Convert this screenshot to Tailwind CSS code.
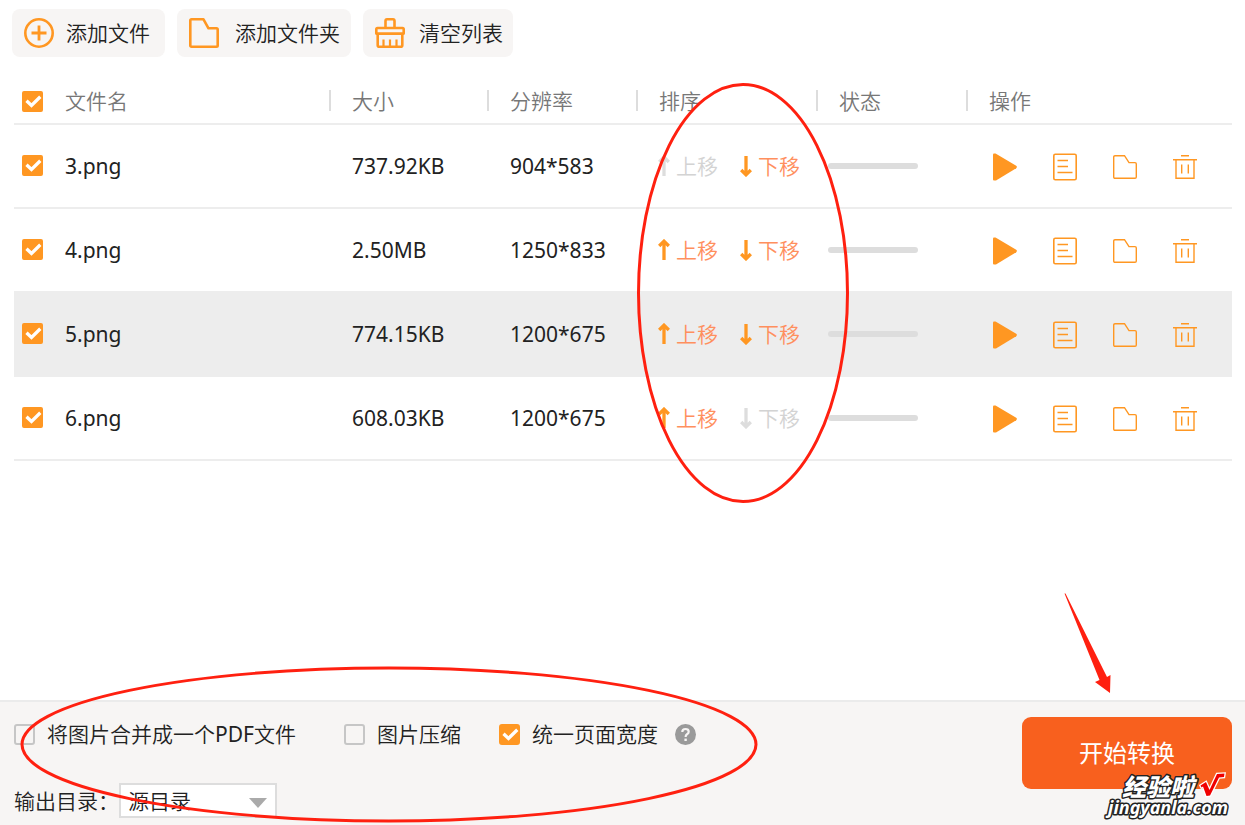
<!DOCTYPE html>
<html lang="zh-CN">
<head>
<meta charset="utf-8">
<meta name="viewport" content="width=device-width, initial-scale=1">
<title>图片转PDF</title>
<script src="https://cdn.jsdelivr.net/npm/@tailwindcss/browser@4"></script>
</head>
<body class="bg-white font-['Noto_Sans','Noto_Sans_CJK_SC',sans-serif] text-[21px] leading-6 text-[#222]">

<svg class="hidden" aria-hidden="true">
  <symbol id="check" viewBox="0 0 21 21"><path d="M4.500 9.700l5 4.700L18.300 5.800" fill="none" stroke="#fff" stroke-width="3.300"/></symbol>
  <symbol id="up" viewBox="0 0 12 22"><path d="M6 21V2.500M1.200 7L6 2.200L10.800 7" fill="none" stroke="currentColor" stroke-width="3.300"/></symbol>
  <symbol id="down" viewBox="0 0 12 22"><path d="M6 1V19.500M1.200 15L6 19.800L10.800 15" fill="none" stroke="currentColor" stroke-width="3.300"/></symbol>
  <symbol id="play" viewBox="0 0 24 28"><path d="M0 1.500Q0 .4 1 .4H2.500L23.200 12.800Q24.600 14 23.200 15.200L3 27.500H1Q0 27.500 0 26.500Z" fill="currentColor"/></symbol>
  <symbol id="doc" viewBox="0 0 24 28"><g fill="none" stroke="currentColor" stroke-width="1.600"><rect x=".8" y="1.200" width="22.400" height="25.600" rx="1.500"/><path d="M4.500 7.500H15M4.500 13.500H15M4.500 19.500H19.500"/></g></symbol>
  <symbol id="folder" viewBox="0 0 24 24"><path d="M2 .7H11.500L16 7.600H22Q23.300 7.600 23.300 8.900V22Q23.300 23.300 22 23.300H2Q.7 23.300 .7 22V2Q.7 .7 2 .7Z" fill="none" stroke="currentColor" stroke-width="1.400"/></symbol>
  <symbol id="trash" viewBox="0 0 24 24"><path d="M8 .7H16M0 4.700H24M3 5V23.300H21V5M8.700 9.500V18.500M15.300 9.500V18.500" fill="none" stroke="currentColor" stroke-width="1.400"/></symbol>
</svg>

<div class="relative flex min-h-screen flex-col overflow-hidden">
  <header class="flex gap-3 px-3 pt-[9px]">
    <button class="flex h-12 items-center gap-3 rounded-lg bg-[#f7f5f4] pr-[15px] pl-3 font-[350]">
      <svg class="size-[30px]" viewBox="0 0 30 30" fill="none" stroke="#ff9722"><circle cx="15" cy="15" r="13.700" stroke-width="2.600"/><path d="M15 7.500V22.500M7.500 15H22.500" stroke-width="2.800"/></svg>
      添加文件</button>
    <button class="flex h-12 items-center gap-4 rounded-lg bg-[#f7f5f4] pr-[11px] pl-3 font-[350]">
      <svg class="size-[30px]" viewBox="0 0 30 30" fill="none" stroke="#ff9722" stroke-width="2.600" stroke-linejoin="round"><path d="M2.500 1.300H14.500L19.500 10.300H27.500Q28.700 10.300 28.700 11.500V27.500Q28.700 28.700 27.500 28.700H2.500Q1.300 28.700 1.300 27.500V2.500Q1.300 1.300 2.500 1.300Z"/></svg>
      添加文件夹</button>
    <button class="flex h-12 items-center gap-[14px] rounded-lg bg-[#f7f5f4] pr-[10px] pl-3 font-[350]">
      <svg class="size-[30px]" viewBox="0 0 30 30" fill="none" stroke="#ff9722" stroke-width="2.600" stroke-linejoin="round"><path d="M10.500 10V3Q10.500 1.300 12 1.300H18Q19.500 1.300 19.500 3V10M2.500 10H27.500Q28.700 10 28.700 11.200V15.600H1.300V11.200Q1.300 10 2.500 10ZM2.700 16V27.200Q2.700 28.700 4.200 28.700H25.800Q27.300 28.700 27.300 27.200V16"/><path d="M8.500 28V21.500M15 28V21.500M21.500 28V21.500" stroke-width="2.200"/></svg>
      清空列表</button>
  </header>

  <main class="flex-1 pt-[21px] pr-[13px] pl-[14px]">
    <table class="w-full table-fixed border-collapse text-left">
      <thead>
        <tr class="h-[46px] border-b-2 border-[#ededed] text-[#777]">
          <th class="w-[51px] pt-px pl-2 font-[350]">
            <span class="grid size-[21px]"><input type="checkbox" checked aria-label="全选" class="peer col-start-1 row-start-1 size-[21px] appearance-none rounded-[2px] border-2 border-[#ccc] checked:border-[#ff9722] checked:bg-[#ff9722]"><svg class="pointer-events-none invisible col-start-1 row-start-1 size-[21px] peer-checked:visible"><use href="#check"/></svg></span>
          </th>
          <th class="font-[350]">文件名</th>
          <th class="w-[158px] font-[350]"><div class="flex h-[21px] items-center border-l-2 border-[#ddd] pl-[21px]">大小</div></th>
          <th class="w-[149px] font-[350]"><div class="flex h-[21px] items-center border-l-2 border-[#ddd] pl-[21px]">分辨率</div></th>
          <th class="w-[180px] font-[350]"><div class="flex h-[21px] items-center border-l-2 border-[#ddd] pl-[21px]">排序</div></th>
          <th class="w-[150px] font-[350]"><div class="flex h-[21px] items-center border-l-2 border-[#ddd] pl-[21px]">状态</div></th>
          <th class="w-[266px] font-[350]"><div class="flex h-[21px] items-center border-l-2 border-[#ddd] pl-[21px]">操作</div></th>
        </tr>
      </thead>
      <tbody id="files"></tbody>
    </table>
  </main>

  <footer class="flex items-start justify-between border-t-2 border-[#ebebeb] bg-[#f7f5f4] pr-[13px] pl-[14px]">
    <div class="pt-5 pb-[7px]">
      <div class="flex h-6 items-center gap-[38px] font-[350]">
        <label class="flex min-w-[292px] items-center gap-3"><span class="grid size-[21px]"><input type="checkbox" class="peer col-start-1 row-start-1 size-[21px] appearance-none rounded-[3px] border-2 border-[#c6c6c6] checked:border-[#ff9722] checked:bg-[#ff9722]"><svg class="pointer-events-none invisible col-start-1 row-start-1 size-[21px] peer-checked:visible"><use href="#check"/></svg></span><span>将图片合并成一个<span class="font-normal">PDF</span>文件</span></label>
        <label class="flex items-center gap-3"><span class="grid size-[21px]"><input type="checkbox" class="peer col-start-1 row-start-1 size-[21px] appearance-none rounded-[3px] border-2 border-[#c6c6c6] checked:border-[#ff9722] checked:bg-[#ff9722]"><svg class="pointer-events-none invisible col-start-1 row-start-1 size-[21px] peer-checked:visible"><use href="#check"/></svg></span>图片压缩</label>
        <div class="flex items-center gap-[17px]">
          <label class="flex items-center gap-3"><span class="grid size-[21px]"><input type="checkbox" checked class="peer col-start-1 row-start-1 size-[21px] appearance-none rounded-[3px] border-2 border-[#c6c6c6] checked:border-[#ff9722] checked:bg-[#ff9722]"><svg class="pointer-events-none invisible col-start-1 row-start-1 size-[21px] peer-checked:visible"><use href="#check"/></svg></span>统一页面宽度</label>
          <button aria-label="帮助" class="size-[21px]"><svg class="size-[21px]" viewBox="0 0 21 21" fill="none"><circle cx="10.500" cy="10.500" r="10.500" fill="#9a9a9a"/><path d="M7.300 8Q7.300 5 10.500 5T13.700 7.800Q13.700 9.300 12 10.200Q10.600 11 10.600 13" stroke="#f7f5f4" stroke-width="2.200"/><path d="M9.400 14.600H11.800V17H9.400Z" fill="#f7f5f4"/></svg></button>
        </div>
      </div>
      <div class="mt-[37px] flex items-center font-[350]">
        <label for="out">输出目录：</label>
        <div class="grid w-[158px]">
          <select id="out" class="col-start-1 row-start-1 h-[35px] w-full appearance-none border-2 border-[#ddd] bg-white pl-[7px] font-[350]"><option>源目录</option></select>
          <svg class="pointer-events-none col-start-1 row-start-1 mt-1 mr-[10px] h-[10px] w-[18px] self-center justify-self-end" viewBox="0 0 18 10"><path d="M0 0H18L9 10Z" fill="#aaa"/></svg>
        </div>
      </div>
    </div>
    <button class="mt-[15px] h-[72px] w-[210px] rounded-[9px] bg-[#f8601e] text-2xl text-white">开始转换</button>
  </footer>

  <!-- Hand-drawn annotations over the window -->
  <svg class="pointer-events-none absolute top-[83px] left-[637px] h-[420px] w-[212px]" viewBox="0 0 212 420"><ellipse cx="106" cy="210" rx="104.500" ry="208.500" fill="none" stroke="#ff2010" stroke-width="3"/></svg>
  <svg class="pointer-events-none absolute bottom-[2px] left-[20px] h-[157px] w-[738px]" viewBox="0 0 738 157"><ellipse cx="369" cy="78.500" rx="367" ry="76.500" fill="none" stroke="#ff2010" stroke-width="3"/></svg>
  <svg class="pointer-events-none absolute right-[132px] bottom-[131px] h-[101px] w-[50px]" viewBox="0 0 50 101"><path d="M1.500 .5H2.500L44 84L47.500 82L47 100L32 89L36.500 87Z" fill="#ff2010"/></svg>
  <svg class="pointer-events-none absolute right-0 bottom-0 h-[60px] w-[150px] font-['Noto_Sans','Noto_Sans_CJK_SC',sans-serif] font-black" viewBox="0 0 150 60">
    <g fill="#fff" stroke="#222" stroke-width="3" paint-order="stroke" stroke-linejoin="round">
      <text x="27" y="31" font-size="24" font-style="italic">经验啦</text>
      <text x="13" y="49" font-size="18" font-weight="700" font-style="italic">jingyanla.com</text>
    </g>
    <path d="M105.500 20.500L111 17L114.500 25L122 9L129.500 8.500L129 12L124 12.500L115 30.500L111.500 31L108 21.500L106.500 22.500Z" fill="#f00000" stroke="#fff" stroke-width="2.500" paint-order="stroke"/>
  </svg>
</div>

<script>
const files = [
  ['3.png', '737.92KB', '904*583'],
  ['4.png', '2.50MB', '1250*833'],
  ['5.png', '774.15KB', '1200*675'],
  ['6.png', '608.03KB', '1200*675'],
];
const move = (icon, label, disabled) => `
  <button ${disabled ? 'disabled' : ''} class="group flex items-center gap-[6px] font-[350] text-[#ff8f5e] disabled:text-[#d3d3d3]">
    <svg class="h-[22px] w-3 text-[#ff9722] group-disabled:text-[#ddd]"><use href="#${icon}"/></svg>${label}</button>`;
document.getElementById('files').innerHTML = files.map(([name, size, res], i) => `
  <tr class="h-[84px] border-b-2 border-[#ededed] ${i === 2 ? 'bg-[#ededed]' : ''}">
    <td class="pb-px pl-2"><span class="grid size-[21px]"><input type="checkbox" checked aria-label="${name}" class="peer col-start-1 row-start-1 size-[21px] appearance-none rounded-[2px] border-2 border-[#ccc] checked:border-[#ff9722] checked:bg-[#ff9722]"><svg class="pointer-events-none invisible col-start-1 row-start-1 size-[21px] peer-checked:visible"><use href="#check"/></svg></span></td>
    <td>${name}</td>
    <td class="pl-[23px]">${size}</td>
    <td class="pl-[23px]">${res}</td>
    <td class="pl-[22px]"><div class="flex gap-[22px]">${move('up', '上移', i === 0)}${move('down', '下移', i === 3)}</div></td>
    <td class="pl-3"><div role="progressbar" aria-label="进度" aria-valuenow="0" class="h-[6px] w-[90px] rounded-full bg-[#ddd]"></div></td>
    <td class="pt-[2px] pl-[27px]"><div class="flex items-center gap-9 text-[#ff9722]">
      <button aria-label="预览" class="h-7 w-6"><svg class="h-7 w-6"><use href="#play"/></svg></button>
      <button aria-label="详情" class="h-7 w-6"><svg class="h-7 w-6"><use href="#doc"/></svg></button>
      <button aria-label="打开文件夹" class="size-6"><svg class="size-6"><use href="#folder"/></svg></button>
      <button aria-label="删除" class="size-6"><svg class="size-6"><use href="#trash"/></svg></button>
    </div></td>
  </tr>`).join('');
</script>
</body>
</html>
